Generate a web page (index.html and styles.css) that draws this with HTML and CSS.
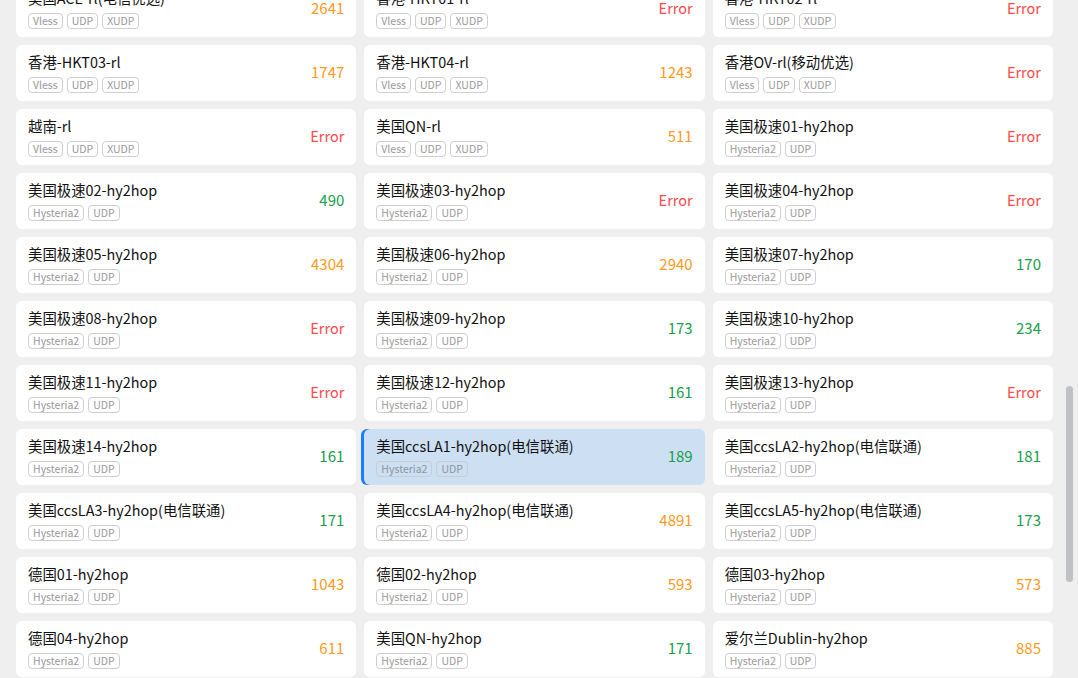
FILE: index.html
```html
<!DOCTYPE html>
<html lang="zh">
<head>
<meta charset="utf-8">
<title>Proxies</title>
<link rel="stylesheet" href="styles.css">
</head>
<body>
<div class="viewport">
  <div class="list">
    <div class="card"><div class="info"><div class="name">美国ACE-rl(电信优选)</div><div class="tags"><span class="tag">Vless</span><span class="tag">UDP</span><span class="tag">XUDP</span></div></div><div class="delay warn">2641</div></div>
    <div class="card"><div class="info"><div class="name">香港-HKT01-rl</div><div class="tags"><span class="tag">Vless</span><span class="tag">UDP</span><span class="tag">XUDP</span></div></div><div class="delay err">Error</div></div>
    <div class="card"><div class="info"><div class="name">香港-HKT02-rl</div><div class="tags"><span class="tag">Vless</span><span class="tag">UDP</span><span class="tag">XUDP</span></div></div><div class="delay err">Error</div></div>

    <div class="card"><div class="info"><div class="name">香港-HKT03-rl</div><div class="tags"><span class="tag">Vless</span><span class="tag">UDP</span><span class="tag">XUDP</span></div></div><div class="delay warn">1747</div></div>
    <div class="card"><div class="info"><div class="name">香港-HKT04-rl</div><div class="tags"><span class="tag">Vless</span><span class="tag">UDP</span><span class="tag">XUDP</span></div></div><div class="delay warn">1243</div></div>
    <div class="card"><div class="info"><div class="name">香港OV-rl(移动优选)</div><div class="tags"><span class="tag">Vless</span><span class="tag">UDP</span><span class="tag">XUDP</span></div></div><div class="delay err">Error</div></div>

    <div class="card"><div class="info"><div class="name">越南-rl</div><div class="tags"><span class="tag">Vless</span><span class="tag">UDP</span><span class="tag">XUDP</span></div></div><div class="delay err">Error</div></div>
    <div class="card"><div class="info"><div class="name">美国QN-rl</div><div class="tags"><span class="tag">Vless</span><span class="tag">UDP</span><span class="tag">XUDP</span></div></div><div class="delay warn">511</div></div>
    <div class="card"><div class="info"><div class="name">美国极速01-hy2hop</div><div class="tags"><span class="tag">Hysteria2</span><span class="tag">UDP</span></div></div><div class="delay err">Error</div></div>

    <div class="card"><div class="info"><div class="name">美国极速02-hy2hop</div><div class="tags"><span class="tag">Hysteria2</span><span class="tag">UDP</span></div></div><div class="delay ok">490</div></div>
    <div class="card"><div class="info"><div class="name">美国极速03-hy2hop</div><div class="tags"><span class="tag">Hysteria2</span><span class="tag">UDP</span></div></div><div class="delay err">Error</div></div>
    <div class="card"><div class="info"><div class="name">美国极速04-hy2hop</div><div class="tags"><span class="tag">Hysteria2</span><span class="tag">UDP</span></div></div><div class="delay err">Error</div></div>

    <div class="card"><div class="info"><div class="name">美国极速05-hy2hop</div><div class="tags"><span class="tag">Hysteria2</span><span class="tag">UDP</span></div></div><div class="delay warn">4304</div></div>
    <div class="card"><div class="info"><div class="name">美国极速06-hy2hop</div><div class="tags"><span class="tag">Hysteria2</span><span class="tag">UDP</span></div></div><div class="delay warn">2940</div></div>
    <div class="card"><div class="info"><div class="name">美国极速07-hy2hop</div><div class="tags"><span class="tag">Hysteria2</span><span class="tag">UDP</span></div></div><div class="delay ok">170</div></div>

    <div class="card"><div class="info"><div class="name">美国极速08-hy2hop</div><div class="tags"><span class="tag">Hysteria2</span><span class="tag">UDP</span></div></div><div class="delay err">Error</div></div>
    <div class="card"><div class="info"><div class="name">美国极速09-hy2hop</div><div class="tags"><span class="tag">Hysteria2</span><span class="tag">UDP</span></div></div><div class="delay ok">173</div></div>
    <div class="card"><div class="info"><div class="name">美国极速10-hy2hop</div><div class="tags"><span class="tag">Hysteria2</span><span class="tag">UDP</span></div></div><div class="delay ok">234</div></div>

    <div class="card"><div class="info"><div class="name">美国极速11-hy2hop</div><div class="tags"><span class="tag">Hysteria2</span><span class="tag">UDP</span></div></div><div class="delay err">Error</div></div>
    <div class="card"><div class="info"><div class="name">美国极速12-hy2hop</div><div class="tags"><span class="tag">Hysteria2</span><span class="tag">UDP</span></div></div><div class="delay ok">161</div></div>
    <div class="card"><div class="info"><div class="name">美国极速13-hy2hop</div><div class="tags"><span class="tag">Hysteria2</span><span class="tag">UDP</span></div></div><div class="delay err">Error</div></div>

    <div class="card"><div class="info"><div class="name">美国极速14-hy2hop</div><div class="tags"><span class="tag">Hysteria2</span><span class="tag">UDP</span></div></div><div class="delay ok">161</div></div>
    <div class="card selected"><div class="info"><div class="name">美国ccsLA1-hy2hop(电信联通)</div><div class="tags"><span class="tag">Hysteria2</span><span class="tag">UDP</span></div></div><div class="delay ok">189</div></div>
    <div class="card"><div class="info"><div class="name">美国ccsLA2-hy2hop(电信联通)</div><div class="tags"><span class="tag">Hysteria2</span><span class="tag">UDP</span></div></div><div class="delay ok">181</div></div>

    <div class="card"><div class="info"><div class="name">美国ccsLA3-hy2hop(电信联通)</div><div class="tags"><span class="tag">Hysteria2</span><span class="tag">UDP</span></div></div><div class="delay ok">171</div></div>
    <div class="card"><div class="info"><div class="name">美国ccsLA4-hy2hop(电信联通)</div><div class="tags"><span class="tag">Hysteria2</span><span class="tag">UDP</span></div></div><div class="delay warn">4891</div></div>
    <div class="card"><div class="info"><div class="name">美国ccsLA5-hy2hop(电信联通)</div><div class="tags"><span class="tag">Hysteria2</span><span class="tag">UDP</span></div></div><div class="delay ok">173</div></div>

    <div class="card"><div class="info"><div class="name">德国01-hy2hop</div><div class="tags"><span class="tag">Hysteria2</span><span class="tag">UDP</span></div></div><div class="delay warn">1043</div></div>
    <div class="card"><div class="info"><div class="name">德国02-hy2hop</div><div class="tags"><span class="tag">Hysteria2</span><span class="tag">UDP</span></div></div><div class="delay warn">593</div></div>
    <div class="card"><div class="info"><div class="name">德国03-hy2hop</div><div class="tags"><span class="tag">Hysteria2</span><span class="tag">UDP</span></div></div><div class="delay warn">573</div></div>

    <div class="card"><div class="info"><div class="name">德国04-hy2hop</div><div class="tags"><span class="tag">Hysteria2</span><span class="tag">UDP</span></div></div><div class="delay warn">611</div></div>
    <div class="card"><div class="info"><div class="name">美国QN-hy2hop</div><div class="tags"><span class="tag">Hysteria2</span><span class="tag">UDP</span></div></div><div class="delay ok">171</div></div>
    <div class="card"><div class="info"><div class="name">爱尔兰Dublin-hy2hop</div><div class="tags"><span class="tag">Hysteria2</span><span class="tag">UDP</span></div></div><div class="delay warn">885</div></div>
  </div>
  <div class="scrollbar"><div class="thumb"></div></div>
</div>
</body>
</html>
```

FILE: styles.css
```css
html, body {
  margin: 0;
  padding: 0;
  height: 100%;
  overflow: hidden;
  background: #efefef;
  font-family: "Noto Sans CJK SC", "Noto Sans", sans-serif;
}

.viewport {
  position: relative;
  width: 1078px;
  height: 678px;
  overflow: hidden;
}

.list {
  display: grid;
  grid-template-columns: repeat(3, 1fr);
  gap: 8px;
  width: 1037px;
  margin: -19px 0 0 16px;
}

.card {
  display: flex;
  align-items: center;
  justify-content: space-between;
  height: 56px;
  box-sizing: border-box;
  padding: 6px 12px 8px 12px;
  background: #ffffff;
  border-radius: 6px;
}

.card.selected {
  background: #cddff3;
  box-shadow: -3px 0 0 0 #1a7cff;
}

.info {
  display: flex;
  flex-direction: column;
  min-width: 0;
}

.name {
  font-size: 14.4px;
  line-height: 21px;
  color: #111;
  white-space: nowrap;
}

.tags {
  display: flex;
  gap: 4px;
  margin-top: 5px;
}

.tag {
  display: inline-block;
  height: 16px;
  box-sizing: border-box;
  padding: 0 4px;
  font-size: 10.5px;
  line-height: 14px;
  color: #9a9a9a;
  border: 1px solid #cfcfcf;
  border-radius: 4px;
}

.selected .tag {
  border-color: #c4cdd8;
  color: #8e96a0;
}

.delay {
  font-size: 15px;
  line-height: 20px;
}

.delay.ok { color: #18a04a; }
.delay.warn { color: #ff9a1a; }
.delay.err { color: #ff4a4a; font-size: 14.5px; }

.scrollbar {
  position: absolute;
  top: 0;
  right: 0;
  width: 16px;
  height: 678px;
  background: #efefef;
}

.thumb {
  position: absolute;
  top: 386px;
  left: 4px;
  width: 7px;
  height: 196px;
  border-radius: 4px;
  background: #c0c1c5;
}
```
